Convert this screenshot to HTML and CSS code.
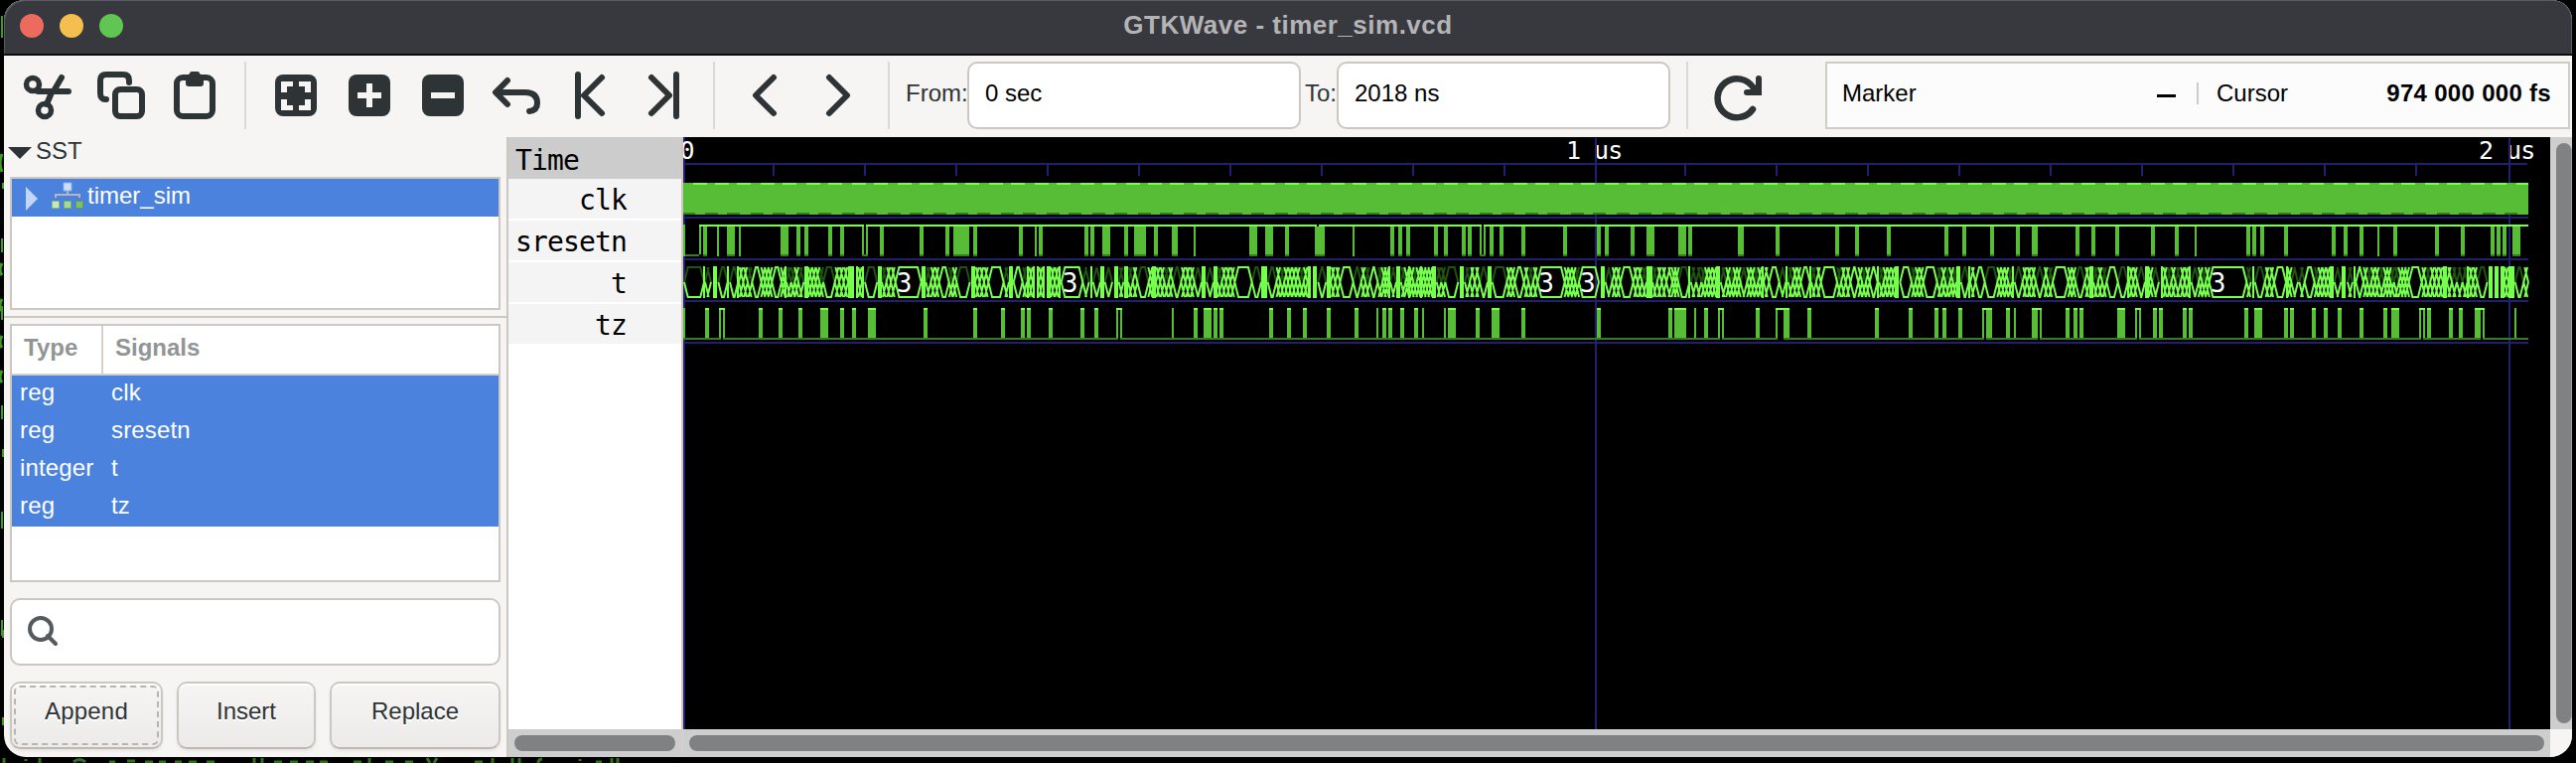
FILE: index.html
```html
<!DOCTYPE html>
<html lang="en">
<head>
<meta charset="utf-8">
<title>GTKWave - timer_sim.vcd</title>
<link rel="stylesheet" href="styles.css">
</head>
<body>
<svg class="backdrop" width="2594" height="768" viewBox="0 0 2594 768" aria-hidden="true">
  <path d="M2 16v22M3 184v6M2 240v14M2 308v14M3 452v8M2 515v17M3 634v8M3 722v8M2 408v14M2 624v16" stroke="#3f9a28" stroke-width="2"/>
  <path d="M2 155q-4 9 0 18M2 265q-4 7 0 12M2 301q-4 7 0 12M2 338q-4 7 0 12M2 373q-4 7 0 12" stroke="#3f9a28" stroke-width="3" fill="none"/>
  <path d="M4 763v5M26 764v2M40 763v5M74 767q6-5 12 0M110 767h6M128 766h8M146 767h8M160 767h7M176 767h7M190 767h8M208 767h8M256 763v5M264 763v5M276 767h8M292 767h8M308 767h8M322 767h8M356 767h8M372 763v5M388 767h8M408 767h8M430 763l3 5M440 763l-3 5M478 767h8M496 763v5M516 763v5M523 763v5M546 764q-4 0-4 4M584 764v2M600 767h6M616 763v5M622 763v5" stroke="#34701f" stroke-width="3" fill="none"/>
</svg>
<main class="window">
  <header class="titlebar">
    <div class="lights"><i class="red"></i><i class="yellow"></i><i class="green"></i></div>
    <h1>GTKWave - timer_sim.vcd</h1>
  </header>
  <nav class="toolbar">
    <svg class="icons" width="716" height="82" viewBox="0 0 716 82" fill="none" stroke="#2e3436" stroke-width="6" stroke-linecap="round" stroke-linejoin="round">
      <g stroke-width="5.5"><ellipse cx="29" cy="29" rx="6.5" ry="6.5"/><circle cx="41" cy="55" r="6.5"/></g>
      <path d="M34 36H65M58 22L51 34M48 37L43 49"/>
      <path d="M103 44h-1c-3 0-5-2-5-6V25q0-6 6-6h17q6 0 6 6v2"/>
      <rect x="112" y="34" width="27" height="27" rx="5"/>
      <rect x="174" y="22" width="36" height="39" rx="6"/>
      <path d="M187 18q0-2 2-2h6q2 0 2 2l4 3v7q0 3-3 3h-12q-3 0-3-3v-7z" fill="#2e3436" stroke="none"/>
      <g stroke="none" fill="#2e3436">
        <rect x="273" y="19" width="42" height="42" rx="8"/><rect x="347" y="19" width="42" height="42" rx="8"/><rect x="421" y="19" width="42" height="42" rx="8"/>
      </g>
      <g stroke="none" fill="#f6f5f4">
        <path d="M279 26h12v5h-6v6h-6zM297 26h12v11h-6v-6h-6zM279 44h6v6h6v5h-12zM303 44h6v11h-12v-5h6z"/>
        <path d="M365 28h6v9h9v6h-9v9h-6v-9h-9v-6h9z"/><path d="M430 37h24v6h-24z"/>
      </g>
      <path d="M507 25L495 37L507 49M497 37h28q12 0 12 11q0 7-8 8"/>
      <path d="M578 19V61M602 22L584 40L602 58"/>
      <path d="M677 19V61M652 22L670 40L652 58"/>
    </svg>
    <i class="vline first"></i><i class="vline second"></i>
    <svg width="174" height="82" viewBox="0 0 174 82" fill="none" stroke="#2e3436" stroke-width="6" stroke-linecap="round" stroke-linejoin="round">
      <path d="M59 22L41 40L59 58M115 22L133 40L115 58"/>
    </svg>
    <i class="vline"></i>
    <label class="from">From:</label><div class="entry from-box">0 sec</div>
    <label class="to">To:</label><div class="entry to-box">2018 ns</div>
    <i class="vline third"></i>
    <svg class="reload" width="48" height="82" viewBox="0 0 48 82">
      <path d="M39 54A19.5 19.5 0 1 1 40 33" fill="none" stroke="#2e3436" stroke-width="6.5" stroke-linecap="round"/>
      <path d="M48 40H33q-3 0-3-3t3-3h5l4-5v-6q0-3 3-3t3 3z" fill="#2e3436"/>
    </svg>
    <div class="readout"><span>Marker</span><i class="dash"></i><i class="pipe"></i><span>Cursor</span><b>974 000 000 fs</b></div>
  </nav>
  <div class="content">
    <aside class="left">
      <section class="sst">
        <div class="sst-title"><svg width="24" height="12"><path d="M0 0h24L12 12z" fill="#2e3436"/></svg><span>SST</span></div>
        <div class="tree"><div class="tree-row">
          <svg class="expander" width="12" height="24"><path d="M0 0L12 12L0 24z" fill="#c3d6f5"/></svg>
          <svg width="32" height="28" viewBox="0 0 32 28"><path d="M4 16v-3h24v3M16 8v5" fill="none" stroke="#b5b5bb" stroke-width="2"/><path d="M12 1h8v8h-8z" fill="#cfdff8" stroke="#8eaee8"/><path d="M.5 19.500h7v7h-7z" fill="#c7e8bd" stroke="#88bb7a"/><path d="M12.500 19.500h7v7h-7z" fill="#a9d998" stroke="#75ae66"/><path d="M24.500 19.500h7v7h-7z" fill="#80c06c" stroke="#5d9d50"/></svg>
          <span>timer_sim</span></div></div>
      </section>
      <section class="signals">
        <div class="table">
          <div class="thead"><b>Type</b><b>Signals</b></div>
          <div class="trow"><span>reg</span><span>clk</span></div>
          <div class="trow"><span>reg</span><span>sresetn</span></div>
          <div class="trow"><span>integer</span><span>t</span></div>
          <div class="trow"><span>reg</span><span>tz</span></div>
        </div>
        <div class="search"><svg width="32" height="32" viewBox="0 0 32 32" fill="none" stroke="#555b5c" stroke-width="4"><circle cx="13" cy="13" r="11"/><path d="M20 20L28 28" stroke-linecap="round"/></svg></div>
        <div class="buttons"><button class="append">Append</button><button class="insert">Insert</button><button class="replace">Replace</button></div>
      </section>
    </aside>
    <section class="names">
      <div class="name-list"><div class="time">Time</div><div class="name">clk</div><div class="name">sresetn</div><div class="name">t</div><div class="name">tz</div></div>
      <div class="hbar"><i></i></div>
    </section>
    <section class="waves">
      <svg id="wave" width="1880" height="596" viewBox="688 138 1880 596"></svg>
      <div class="hbar wide"><i></i></div>
    </section>
    <div class="vbar"><div class="track"><i></i></div><div class="corner"></div></div>
  </div>
</main>
<script src="wave.js"></script>
</body>
</html>
```

FILE: styles.css
```css
* { box-sizing: border-box; }
body { margin: 0; width: 2594px; height: 768px; overflow: hidden; background: #000; font: 24px/28px "Liberation Sans", Arial, sans-serif; color: #2e3436; position: relative; }
i { display: block; flex: none; }
svg { display: block; flex: none; }
.backdrop { position: absolute; left: 0; top: 0; }
.window { position: relative; margin-left: 4px; width: 2586px; height: 762px; border-radius: 20px 20px 22px 22px; overflow: hidden; background: #f6f5f4; display: flex; flex-direction: column; }
.titlebar { height: 56px; flex: none; background: #38393e; border-bottom: 2px solid #0c0c0d; box-shadow: inset 2px 2px 0 -1px #5a5b60, inset -2px 0 0 -1px #5a5b60; display: grid; grid-template-columns: 1fr auto 1fr; align-items: center; border-radius: 20px 20px 0 0; }
.titlebar h1 { margin: 0 0 5px; font-size: 26px; line-height: 30px; letter-spacing: .5px; color: #b4b4b7; font-weight: bold; }
.lights { display: flex; gap: 16px; padding-left: 16px; margin-bottom: 2px; }
.lights i { width: 24px; height: 24px; border-radius: 50%; }
.red { background: #ed6a5e; }
.yellow { background: #f5bf4f; }
.green { background: #61c554; }
.toolbar { height: 82px; flex: none; display: flex; align-items: flex-start; color: #2e3436; }
.vline { width: 2px; height: 68px; margin-top: 6px; background: #dbd9d6; }
.icons { margin-right: -716px; }
.vline.first { margin-left: 242px; }
.vline.second { margin-left: 470px; }
.toolbar label { line-height: 75px; white-space: nowrap; }
.from { margin-left: 16px; width: 62px; }
.to { margin-left: 4px; width: 32px; }
.entry { height: 68px; margin-top: 6px; border: 2px solid #cdc7c2; border-radius: 10px; background: #fff; padding: 0 16px; line-height: 59px; color: #000; }
.from-box { width: 336px; }
.to-box { width: 336px; }
.vline.third { margin-left: 16px; }
.reload { margin-left: 26px; }
.readout { margin: 6px 0 0 64px; width: 750px; height: 68px; border: 2px solid #cfcec6; background: #fcfcfc; color: #000; display: flex; align-items: center; padding: 0 17px 5px 15px; }
.readout .dash { width: 19px; height: 3px; background: #000; margin: 5px 21px 0 auto; }
.readout .pipe { width: 2px; height: 22px; background: #ccc; margin-right: 18px; }
.readout b { margin-left: 97px; width: 168px; text-align: right; letter-spacing: .3px; white-space: nowrap; }
.content { flex: 1; display: flex; min-height: 0; }
.left { width: 506px; flex: none; display: flex; flex-direction: column; }
.sst { height: 182px; border-bottom: 2px solid #cdc7c2; padding: 0 6px; }
.sst-title { height: 40px; display: flex; gap: 4px; padding: 0 0 13px; align-items: center; margin-left: -2px; }
.sst-title svg { margin-top: 4px; }
.tree { height: 134px; border: 2px solid #cdc7c2; background: #fff; }
.tree-row { height: 38px; background: #4a82dd; color: #fff; display: flex; align-items: flex-start; padding: 3px 0 0 14px; }
.tree-row .expander { margin: 5px 14px 0 0; }
.tree-row span { margin: 0 0 0 4px; }
.signals { padding: 6px 6px 0; display: flex; flex-direction: column; }
.table { height: 260px; border: 2px solid #cdc7c2; background: #fff; }
.thead, .trow { display: grid; grid-template-columns: 92px 1fr; }
.thead { height: 50px; border-bottom: 2px solid #d5d0cc; color: #929595; line-height: 43px; }
.thead b { padding-left: 12px; }
.thead b:first-child { border-right: 2px solid #d5d0cc; }
.trow { height: 38px; background: #4a82dd; color: #fff; line-height: 33px; letter-spacing: .15px; }
.trow span { padding-left: 8px; }
.search { height: 68px; margin-top: 16px; border: 2px solid #cdc7c2; border-radius: 10px; background: #fff; padding: 16px; }
.buttons { margin-top: 16px; display: flex; justify-content: space-between; }
.buttons button { height: 68px; border: 2px solid #cdc7c2; border-bottom-color: #bfb8b1; border-radius: 10px; background: linear-gradient(#f6f5f4, #edebe9); box-shadow: inset 0 2px #fff, 0 2px 3px #0001; font: inherit; color: #2e3436; padding: 0 0 8px; text-shadow: 0 2px #fff; outline: 0; }
.buttons .append { width: 154px; letter-spacing: .2px; outline: 2px dashed #b5b5b4; outline-offset: -6px; }
.buttons .insert { width: 140px; }
.buttons .replace { width: 172px; }
.names { width: 178px; flex: none; border-left: 2px solid #cdc7c2; display: flex; flex-direction: column; font: 28px/40px "DejaVu Sans Mono", monospace; letter-spacing: -.86px; color: #000; }
.name-list { height: 596px; background: #fff; border-right: 2px solid #cdc7c2; }
.time { height: 42px; background: #ccc; padding: 4px 0 0 7px; }
.name { height: 40px; margin-bottom: 2px; background: #f4f4f4; text-align: right; padding: 2px 55px 0 0; }
.hbar { height: 28px; background: #cecece; padding: 6px 6px 0; border-right: 2px solid #d5d0cd; }
.hbar i { height: 16px; border-radius: 8px; background: #808182; }
.waves { width: 1880px; flex: none; background: #000; }
.hbar.wide { border: 0; }
.vbar { width: 22px; flex: none; }
.track { height: 596px; background: #cecece; padding: 6px 0 0 6px; }
.track i { width: 16px; height: 584px; border-radius: 8px; background: #808182; border-right: 1px solid #a0a0a0; }
.corner { height: 28px; background: #f6f5f4; }
#wave text { font-family: "DejaVu Sans Mono", monospace; fill: #fff; }
.axis { fill: #20206e; }
.mid { fill: #57bd37; }
.high { fill: #76ff4c; }
.low { fill: #397b23; }
.bus { fill: none; stroke: #76ff4c; stroke-width: 2; }
.bus.zero { stroke: #1f5310; }
.blank { fill: #000; }
```

FILE: wave.js
```js
// Waveform pane: each trace is stored in four blocks of [origin, data], three units per pixel.
// Pulse suffixes: t = one-sample pulse, h = pulse open in the middle.
const START = 688, END = 2546;
const RESET = [
  [680, '84-96 126-132t 156-180 192-198t 318-342 366-378 390-402 462-474 498-510 564-582h 618-630 738-750 816-828 840-888 900-912 1038-1050 1086-1092t 1098-1110 1236-1248 1254-1266 1290-1314 1356-1368 1386-1422'],
  [1160, '6-18 60-78 126-132t 294-318 342-366 402-414 492-504h 504-522 606-612t 720-732 744-756 768-780 852-864 882-894 936-948 954-966 990-1008h 1020-1032 1050-1062 1116-1128 1242-1254 1344-1356 1368-1380'],
  [1640, '6-18 54-78 150-174 180-192 330-348 444-456 624-636 684-696 780-792 954-966 1008-1020 1092-1104 1170-1182 1218-1236 1350-1362 1398-1410'],
  [2114, '48-60 156-168 228-240 288-294t 444-456 462-474 486-498 558-570 702-714 738-750 786-798 840-846t 888-900 1014-1026 1092-1104 1182-1194 1200-1212 1218-1230 1248-1272']
];
const TZ = [
  [680, '24-30t 90-102 132-150h 252-264 312-324 372-384 438-462 498-510 534-546 582-606 750-762 900-912 984-996 1044-1056 1062-1074 1128-1140 1224-1236 1266-1278 1332-1350h'],
  [1160, '60-66t 126-138 156-180 186-198 204-216 354-366 408-420 456-468 528-540 612-624 678-684t 696-708 714-726 750-762 792-804 816-822t 882-888t 894-918 978-990 1026-1050 1116-1128 1344-1356'],
  [1640, '120-132 138-174 198-204t 228-240 270-288h 384-396 444-474h 468-486 540-552 744-756 846-858 924-936 948-960 996-1008 1068-1086h 1080-1098 1140-1152 1164-1170t 1218-1236 1230-1248h 1320-1332 1344-1356 1362-1374'],
  [2114, '54-78 108-126h 162-174 180-192 252-264 270-282 438-450 468-492 558-570 576-588 642-654 678-690 720-732 786-798 858-870 882-906 966-984h 990-1002 1056-1068 1086-1098 1134-1152 1146-1164h 1254-1260t']
];
// Bus cells: z = value zero, v = solid bar, 3 = labelled; the rest is filled with short cells.
const BUS = [
  [680, '27-87z 84-90v 90-108z 114-126v 130-158z 156-162v 165-190z 186-192v 232-260 292-321 330-336v 336-350z 372-388z 390-402v 447-482z 522-540v 546-552v 564-570v 573-610z 612-624v 665-743=3 744-756v 757-772z 797-827 850-890z 894-906v 946-992 1008-1020v 1022-1049 1049-1062z 1062-1068v 1080-1086v 1092-1098v 1110-1116v 1122-1134v 1158-1164v 1166-1231=3 1231-1250z 1254-1260v 1262-1284z 1284-1296v 1298-1320z 1326-1338v 1340-1354z 1356-1368v 1396-1430z'],
  [1160, '0-12v 63-88z 128-150z 150-162v 165-186z 186-198v 250-302 302-330z 330-348v 350-376z 470-480v 486-498v 502-526z 528-540v 568-608 608-632z 658-682 682-696z 714-720v 720-738z 738-750v 752-766z 774-780v 810-816v 846-858v 860-874z 886-925z 930-942v 945-960z 975-990 990-1014z 1014-1026v 1028-1072z 1096-1124 1165-1247=3 1290-1350=3 1356-1368v 1370-1390z 1415-1454'],
  [1640, '54-72v 72-86z 114-132 150-184z 180-186v 188-204z 204-220z 264-276v 278-295z 338-358z 402-408v 424-455 455-475z 474-480v 482-496z 520-548 546-552v 581-630 630-642z 670-694 728-752 750-756v 757-770z 804-816v 820-855 890-932 932-946z 957-970z 990-1002v 1004-1028z 1026-1032v 1048-1076 1076-1114z 1158-1164v 1166-1190z 1230-1254z 1281-1328 1350-1378z 1392-1404v 1404-1418z'],
  [2114, '22-56 56-86z 84-90v 115-138z 138-150v 160-180z 186-192v 230-245z 270-276v 278-300z 332-445=3 445-458z 462-468v 470-500z 528-564 564-570v 580-600z 604-620z 620-650 696-708v 710-730z 732-744v 750-765z 768-774v 775-798 845-860z 890-905z 935-974 1038-1050v 1065-1080z 1097-1112z 1110-1116v 1142-1172z 1176-1188v 1194-1206v 1212-1224v 1236-1254v 1256-1282z 1282-1296']
];

let out = '';
const rect = (cls, x, y, w, h) => { out += `<rect class="${cls}" x="${x}" y="${y}" width="${w}" height="${h}"/>`; };
const label = (x, y, size, s, extra = '') => { out += `<text x="${x}" y="${y}" font-size="${size}" xml:space="preserve" ${extra}>${s}</text>`; };
const parse = blocks => blocks.flatMap(([origin, list]) => list.split(' ').map(item => {
  const m = item.match(/^(\d+)-(\d+)(.*)$/);
  return { a: origin + m[1] / 3, b: origin + m[2] / 3, kind: m[3] };
}));

// Grid and timescale
rect('axis', START, 138, 2, 596);
label(684.5, 160, 25, '0');
label(1577, 160, 25, '1 us', 'letter-spacing="-1"');
label(2496, 160, 25, '2 us', 'letter-spacing="-1"');
rect('axis', 1606, 139, 2, 595);
rect('axis', 2526, 139, 2, 595);
rect('axis', START, 164, END - START - 1, 2);
for (let k = 1; k < 20; k++) if (k !== 10) rect('axis', 686 + 92 * k + (k > 10 ? -2 : 0), 166, 2, 11);
for (const y of [218, 260, 302, 344]) rect('axis', START, y, END - START, 2);

// clk
rect('mid', START, 184, END - START, 32);
for (let k = 0; k < 81; k++) {
  const x = Math.floor((698 + 22.95 * k) / 2) * 2;
  if (x < END) rect('high', x, 184, Math.min(14, END - x), 2);
}
rect('low', START, 214, 12, 2);
for (let k = 0; k < 81; k++) {
  const x = Math.floor((710.5 + 22.95 * k) / 2) * 2;
  if (x < 2530) rect('low', x, 214, 13, 2);
}

// sresetn
rect('mid', START, 226, 2, 32);
rect('low', 690, 256, 14, 2);
rect('mid', 704, 226, 2, 30);
rect('high', 704, 226, END - 704, 2);
for (const { a, b, kind } of parse(RESET)) {
  if (kind === 'h') {
    rect('mid', a, 228, 2, 28);
    rect('mid', b - 2, 228, 2, 28);
    rect('blank', a + 2, 226, 2, 2);
    rect('low', a, 256, b - a, 2);
  } else {
    rect('mid', a, 228, b - a, kind === 't' ? 30 : 28);
    if (!kind) rect('low', a, 256, b - a, 2);
  }
}

// t
const cells = [];
let at = START;
let n = 0;
for (const c of parse(BUS)) {
  const gap = c.a - at;
  if (gap > 2) {
    const count = Math.max(1, Math.round(gap / 4));
    for (let i = 0; i < count; i++) cells.push({ a: at + gap * i / count, b: at + gap * (i + 1) / count, kind: n++ % 5 === 2 ? 'z' : '' });
  }
  cells.push(c);
  at = Math.max(at, c.b);
}
let bright = '', dark = '';
const bars = [];
for (const { a, b, kind } of cells) {
  if (kind === 'v') { bars.push([a, b]); continue; }
  const h = 3.7, wide = b - a > 2 * h;
  const top = `M${a} 284L${a + h} 269` + (wide ? `H${b - h}` : `M${b - h} 269`) + `L${b} 284`;
  const bottom = `M${a} 284L${a + h} 299` + (wide ? `H${b - h}` : `M${b - h} 299`) + `L${b} 284`;
  if (kind === 'z') dark += top; else bright += top;
  bright += bottom;
}
out += `<path class="bus zero" d="${dark}"/><path class="bus" d="${bright}"/>`;
for (const [a, b] of bars) rect('high', a, 268, b - a, 32);
for (const { a, kind } of cells) if (kind === '=3') label(a + 1, 294, 26, '3');

// tz
rect('low', START, 340, END - START, 2);
for (const { a, b, kind } of parse(TZ)) {
  if (kind === 'h') {
    rect('mid', a, 310, 2, 30);
    rect('mid', b - 2, 310, 2, 30);
    rect('high', a, 310, b - a, 2);
    rect('blank', a + 2, 340, b - a - 4, 2);
  } else {
    rect('mid', a, 310, b - a, 30);
    if (!kind) rect('high', a, 310, b - a, 2);
  }
}
document.getElementById('wave').innerHTML = out;
```
